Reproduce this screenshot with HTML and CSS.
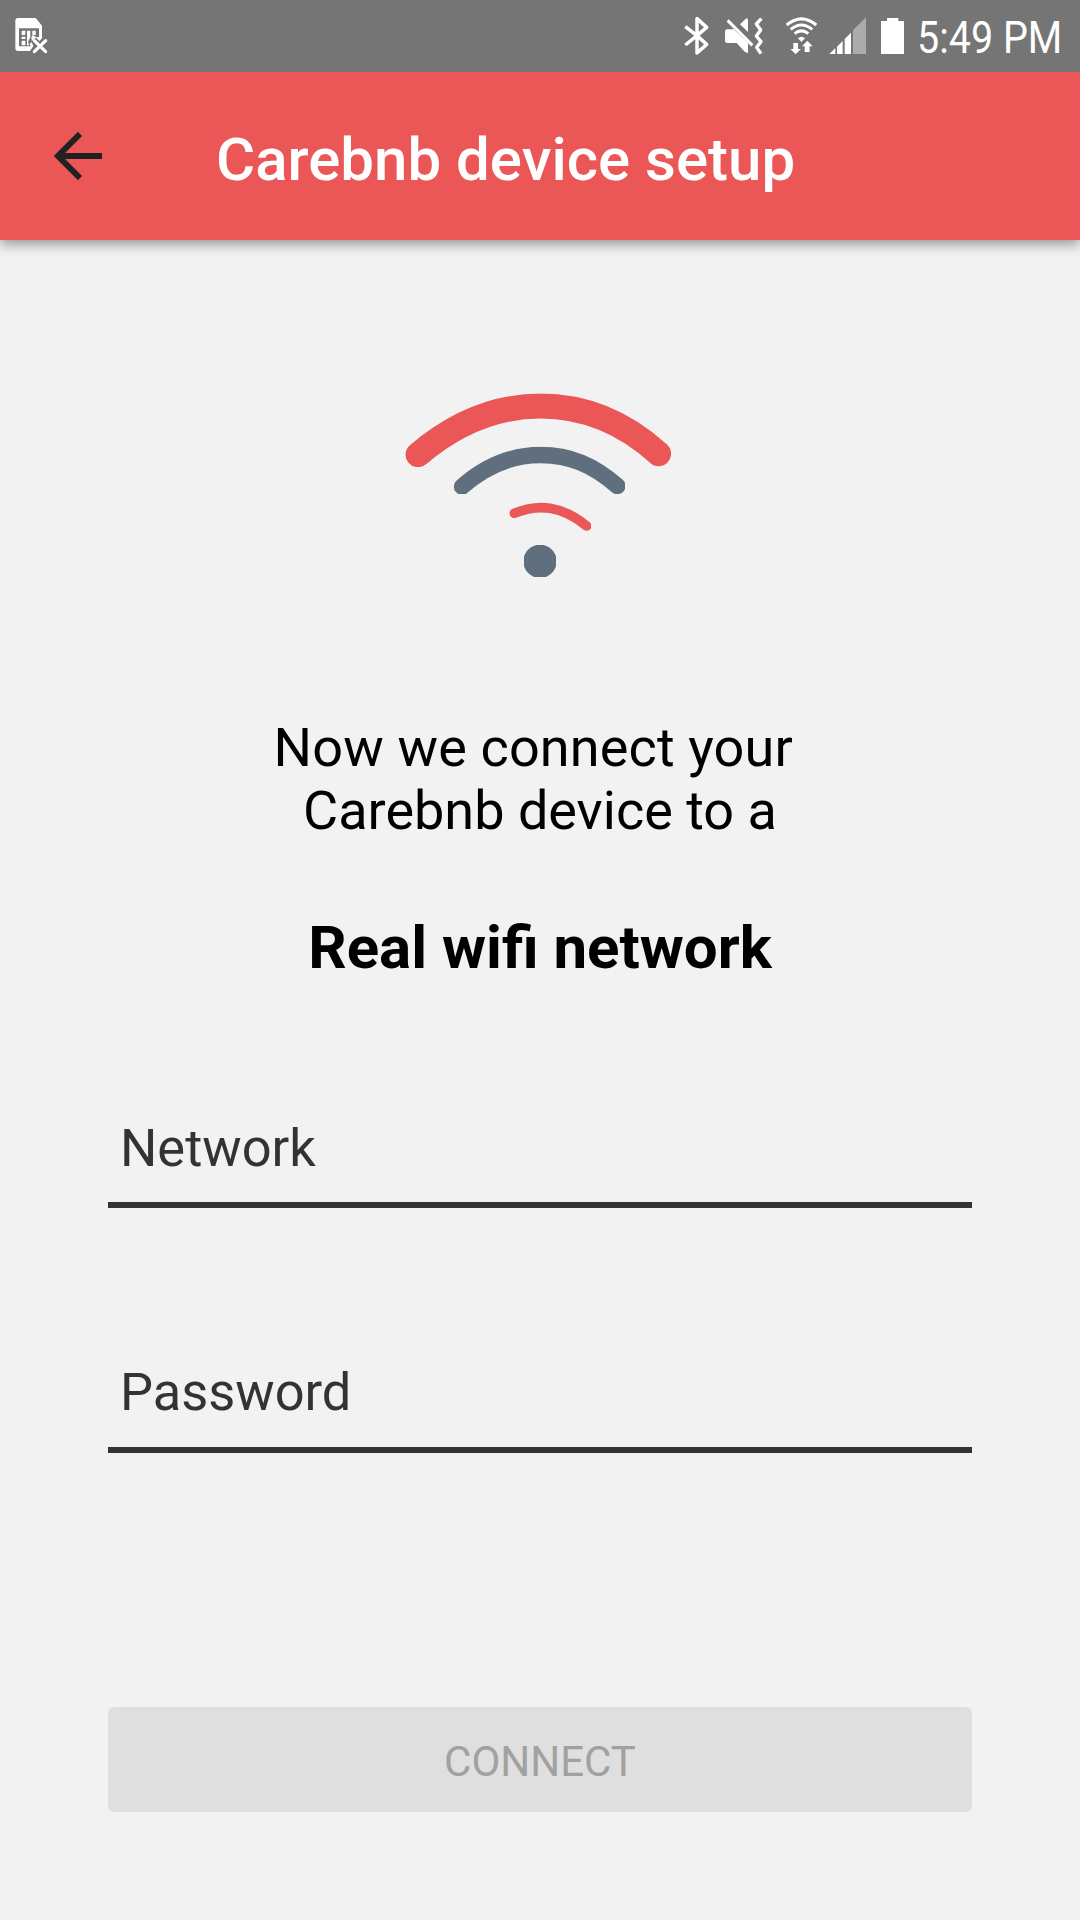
FILE: index.html
```html
<!DOCTYPE html>
<html lang="en">
<head>
<meta charset="utf-8">
<title>Carebnb device setup</title>
<link rel="stylesheet" href="styles.css">
</head>
<body>
<div class="screen">
  <div class="status-bar">
    <svg class="sim-icon" viewBox="42 48 102 114" aria-hidden="true">
      <path fill="#fff" d="M54 54H107L126 77V115L118 123L108 113L94 124L100 138L90 153H54Q46 153 46 145V63Q46 54 54 54Z"/>
      <path fill="#757575" d="M57 85H117V112H110L98 105L94 112L96 126L89 132L92 139H57Z"/>
      <path fill="#fff" d="M65 92H76V105H65ZM65 110H76V117H65ZM65 122H76V136H65ZM81 92H91V112L84 125L88 136H81ZM97 92H107V105H97Z"/>
      <path stroke="#757575" stroke-width="17" d="M101 120L139 157M139 120L101 157"/>
      <path stroke="#fff" stroke-width="9.5" stroke-linecap="round" d="M103 122L137 155M137 122L103 155"/>
    </svg>
    <svg class="system-icons" viewBox="0 0 735 240" aria-hidden="true">
      <path fill="none" stroke="#fff" stroke-width="10.5" stroke-linejoin="round" d="M46 80L81 107L110 82L81 56V159L110 133L81 107L46 135"/>
      <path fill="#fff" d="M210 73L229 55L234 58V96Z"/>
      <path stroke="#757575" stroke-width="19" d="M178 56L252 132"/>
      <path stroke="#fff" stroke-width="9" d="M173 61L247 136"/>
      <path fill="#fff" d="M171 88H191L220 115L234 130V160L224 155L200 129H171Q165 129 165 123V94Q165 88 171 88Z"/>
      <path fill="none" stroke="#fff" stroke-width="10" stroke-linejoin="round" d="M274 56L259 72L272 90L259 108L273 125L260 142L273 161"/>
      <g fill="none" stroke="#fff" stroke-width="9">
        <path d="M350 75Q394 38 439 75"/>
        <path d="M362 88Q394 62 427 88"/>
        <path d="M374 101Q394 84 415 101"/>
      </g>
      <path fill="#fff" d="M384 115Q394 105 405 115L394 126ZM370 129H384V147H393L377 163L361 147H370ZM404 156V139H396L412 122L428 139H419V156Z"/>
      <path fill="#acacac" d="M549 91L588 52V162H549Z"/>
      <path fill="#fff" d="M478 162L496 144V162ZM501 140L518 123V162H501ZM524 117L543 98V162H524Z"/>
      <path fill="#fff" d="M651 54H685V63H702V162H633V63H651Z"/>
    </svg>
    <span class="clock">5:49 PM</span>
  </div>
  <header class="app-bar">
    <svg class="back-icon" viewBox="0 0 48 48" role="img" aria-label="Back">
      <path fill="none" stroke="#212121" stroke-width="6" d="M48 24H5M26 2L4 24L26 46"/>
    </svg>
    <h1 class="title">Carebnb device setup</h1>
  </header>
  <main class="content">
    <svg class="wifi-art" viewBox="0 0 900 660" aria-hidden="true">
      <defs>
        <clipPath id="outer"><path d="M45 70H843V291H45Z"/></clipPath>
        <clipPath id="middle"><path d="M191 230H705V372H191Z"/></clipPath>
        <clipPath id="inner"><path d="M357 396H603V483H357Z"/></clipPath>
        <clipPath id="dot"><path d="M402 525H498V621H402Z"/></clipPath>
      </defs>
      <g fill="none" stroke-linecap="round">
        <path clip-path="url(#outer)" stroke="#eb5757" stroke-width="75" d="M84 254C195 160 318 108 452 108S705 160 806 251"/>
        <path clip-path="url(#middle)" stroke="#5f6f7d" stroke-width="49" d="M216 350C290 285 365 255 452 255S610 285 682 348"/>
        <path clip-path="url(#inner)" stroke="#eb5757" stroke-width="29" d="M373 430C445 401 514 406 590 468"/>
      </g>
      <circle clip-path="url(#dot)" cx="450" cy="574" r="50" fill="#5f6f7d"/>
    </svg>
    <p class="intro"><span class="intro-lead">Now we connect your </span>
Carebnb device to a</p>
    <h2 class="network-kind">Real wifi network</h2>
    <form class="form">
      <input class="field" type="text" placeholder="Network" aria-label="Network">
      <input class="field field-password" type="password" placeholder="Password" aria-label="Password">
      <button class="connect" type="button" disabled>CONNECT</button>
    </form>
  </main>
</div>
</body>
</html>
```

FILE: styles.css
```css
* {
  box-sizing: border-box;
}

body {
  margin: 0;
  background: #f2f2f2;
  font-family: Roboto, sans-serif;
}

.screen {
  display: flex;
  flex-direction: column;
  width: 1080px;
  height: 1920px;
  overflow: hidden;
}

.status-bar {
  z-index: 1;
  display: flex;
  align-items: flex-start;
  height: 72px;
  padding-left: 14px;
  background: #757575;
}

.sim-icon {
  flex: none;
  width: 34px;
  height: 38px;
  margin-top: 16px;
}

.system-icons {
  flex: none;
  width: 245px;
  height: 80px;
  margin-left: 622px;
  margin-right: 2px;
}

.clock {
  color: #fff;
  font-size: 45px;
  line-height: 53px;
  margin-top: 11px;
  white-space: nowrap;
  transform: scaleX(0.877);
  transform-origin: left;
}

.app-bar {
  display: flex;
  align-items: flex-start;
  height: 168px;
  padding-left: 54px;
  background: #eb5757;
  box-shadow: 0 4px 12px rgba(0, 0, 0, 0.4);
}

.back-icon {
  width: 48px;
  height: 48px;
  margin-top: 60px;
}

.title {
  margin: 53px 0 0 114px;
  color: #fff;
  font-size: 60px;
  font-weight: 500;
  line-height: 70px;
}

.content {
  display: flex;
  flex-direction: column;
  align-items: center;
  padding: 130px 108px 0;
}

.wifi-art {
  width: 300px;
  height: 220px;
}

.intro {
  margin: 126px 0 0;
  font-size: 54px;
  line-height: 63px;
  text-align: center;
  white-space: pre;
}

.intro-lead {
  letter-spacing: 0.14px;
}

.network-kind {
  margin: 71px 0 0;
  font-size: 60px;
  font-weight: 700;
  line-height: 70px;
}

.form {
  display: flex;
  flex-direction: column;
  width: 100%;
  margin-top: 115px;
}

.field {
  height: 110px;
  margin: 0 0 135px;
  padding: 0 12px 5px;
  border: 0;
  border-bottom: 6px solid #333;
  border-radius: 0;
  background: none;
  color: #333;
  font: 400 52.4px Roboto, sans-serif;
}

.field-password {
  padding-bottom: 7px;
}

.field::placeholder {
  color: #333;
  opacity: 1;
}

.connect {
  height: 105px;
  margin-top: 119px;
  padding: 4px 0 0;
  border: 0;
  border-radius: 6px;
  background: #dfdfdf;
  color: #a1a1a1;
  font: 400 42px Roboto, sans-serif;
}
```
